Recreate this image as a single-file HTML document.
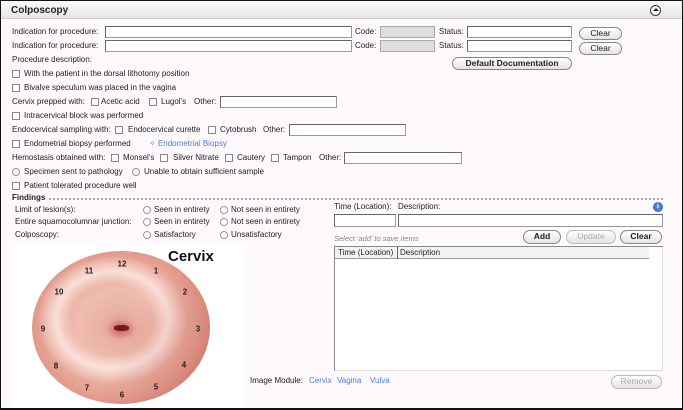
<!DOCTYPE html>
<html><head><meta charset="utf-8"><style>
*{margin:0;padding:0;box-sizing:border-box}
body{width:683px;height:410px;overflow:hidden;font-family:"Liberation Sans",sans-serif;font-size:8px;color:#222;background:#fff}
#f{position:absolute;left:0;top:0;width:683px;height:410px;border:1px solid #111;border-bottom:2px solid #111;background:#fdf9fd}
.a{position:absolute;white-space:nowrap;line-height:10px}
.hd{position:absolute;left:0;top:0;width:681px;height:18px;background:linear-gradient(#fafafa,#e6e6e6);border-bottom:1px solid #ccc}
.in{position:absolute;height:12px;background:#fff;border:1px solid #999;border-top-color:#666;border-left-color:#666}
.cd{background:#ddd;border-color:#aaa}
.bt{position:absolute;height:13px;border:1px solid #888;border-radius:7px;background:linear-gradient(#fff,#e4e4e4);text-align:center;line-height:11px;font-size:8.5px}
.cb{position:absolute;width:8px;height:8px;border:1px solid #888;background:#fff}
.rd{position:absolute;width:8px;height:8px;border:1px solid #999;border-radius:50%;background:#fff}
.lk{color:#4a7de0}
.n{position:absolute;font-weight:bold;font-size:8px;color:#222;transform:translate(-50%,-50%)}
</style></head><body><div id="f">
<div class="hd"></div>
<div class="a" style="left:10px;top:5px;font-weight:bold;font-size:10px">Colposcopy</div>
<div style="position:absolute;left:649px;top:4px;width:11px;height:11px;border:1px solid #333;border-radius:50%;background:#fff"></div>
<div style="position:absolute;left:652px;top:7px;width:0;height:0;border-left:3px solid transparent;border-right:3px solid transparent;border-bottom:3px solid #222"></div>

<div class="a" style="left:11px;top:26px">Indication for procedure:</div>
<div class="in" style="left:104px;top:25px;width:247px"></div>
<div class="a" style="left:354px;top:26px">Code:</div>
<div class="in cd" style="left:379px;top:25px;width:55px"></div>
<div class="a" style="left:438px;top:26px">Status:</div>
<div class="in" style="left:466px;top:25px;width:105px"></div>
<div class="bt" style="left:578px;top:26px;width:43px">Clear</div>

<div class="a" style="left:11px;top:40px">Indication for procedure:</div>
<div class="in" style="left:104px;top:39px;width:247px"></div>
<div class="a" style="left:354px;top:40px">Code:</div>
<div class="in cd" style="left:379px;top:39px;width:55px"></div>
<div class="a" style="left:438px;top:40px">Status:</div>
<div class="in" style="left:466px;top:39px;width:105px"></div>
<div class="bt" style="left:578px;top:41px;width:43px">Clear</div>
<div class="bt" style="left:451px;top:56px;width:120px;font-weight:bold">Default Documentation</div>

<div class="a" style="left:11px;top:54px">Procedure description:</div>
<div class="cb" style="left:11px;top:69px"></div><div class="a" style="left:23px;top:68px">With the patient in the dorsal lithotomy position</div>
<div class="cb" style="left:11px;top:83px"></div><div class="a" style="left:23px;top:82px">Bivalve speculum was placed in the vagina</div>
<div class="a" style="left:11px;top:96px">Cervix prepped with:</div>
<div class="cb" style="left:90px;top:97px"></div><div class="a" style="left:100px;top:96px">Acetic acid</div>
<div class="cb" style="left:148px;top:97px"></div><div class="a" style="left:160px;top:96px">Lugol's</div>
<div class="a" style="left:193px;top:96px">Other:</div><div class="in" style="left:219px;top:95px;width:117px"></div>
<div class="cb" style="left:11px;top:111px"></div><div class="a" style="left:23px;top:110px">Intracervical block was performed</div>
<div class="a" style="left:11px;top:124px">Endocervical sampling with:</div>
<div class="cb" style="left:114px;top:125px"></div><div class="a" style="left:127px;top:124px">Endocervical curette</div>
<div class="cb" style="left:207px;top:125px"></div><div class="a" style="left:219px;top:124px">Cytobrush</div>
<div class="a" style="left:262px;top:124px">Other:</div><div class="in" style="left:288px;top:123px;width:117px"></div>
<div class="cb" style="left:11px;top:139px"></div><div class="a" style="left:23px;top:138px">Endometrial biopsy performed</div>
<div class="a lk" style="left:148px;top:138px">✧ Endometrial Biopsy</div>
<div class="a" style="left:11px;top:152px">Hemostasis obtained with:</div>
<div class="cb" style="left:110px;top:153px"></div><div class="a" style="left:122px;top:152px">Monsel's</div>
<div class="cb" style="left:159px;top:153px"></div><div class="a" style="left:172px;top:152px">Silver Nitrate</div>
<div class="cb" style="left:224px;top:153px"></div><div class="a" style="left:236px;top:152px">Cautery</div>
<div class="cb" style="left:270px;top:153px"></div><div class="a" style="left:282px;top:152px">Tampon</div>
<div class="a" style="left:318px;top:152px">Other:</div><div class="in" style="left:343px;top:151px;width:118px"></div>
<div class="rd" style="left:11px;top:167px"></div><div class="a" style="left:23px;top:166px">Specimen sent to pathology</div>
<div class="rd" style="left:131px;top:167px"></div><div class="a" style="left:143px;top:166px">Unable to obtain sufficient sample</div>
<div class="cb" style="left:11px;top:181px"></div><div class="a" style="left:23px;top:180px">Patient tolerated procedure well</div>

<div class="a" style="left:11px;top:192px;font-weight:bold">Findings</div>
<div style="position:absolute;left:48px;top:197px;width:614px;border-top:2px dotted #aaa"></div>
<div class="a" style="left:14px;top:204px">Limit of lesion(s):</div>
<div class="a" style="left:14px;top:216px">Entire squamocolumnar junction:</div>
<div class="a" style="left:14px;top:229px">Colposcopy:</div>
<div class="rd" style="left:142px;top:205px"></div><div class="a" style="left:153px;top:204px">Seen in entirety</div>
<div class="rd" style="left:219px;top:205px"></div><div class="a" style="left:230px;top:204px">Not seen in entirety</div>
<div class="rd" style="left:142px;top:217px"></div><div class="a" style="left:153px;top:216px">Seen in entirety</div>
<div class="rd" style="left:219px;top:217px"></div><div class="a" style="left:230px;top:216px">Not seen in entirety</div>
<div class="rd" style="left:142px;top:230px"></div><div class="a" style="left:153px;top:229px">Satisfactory</div>
<div class="rd" style="left:219px;top:230px"></div><div class="a" style="left:230px;top:229px">Unsatisfactory</div>

<div style="position:absolute;left:12px;top:244px;width:233px;height:162px;background:#fff"></div>
<div style="position:absolute;left:31px;top:250px;width:178px;height:153px;border-radius:50%;background:radial-gradient(ellipse 42% 42% at 45% 45%,rgba(255,255,255,0) 55%,rgba(255,240,235,.75) 75%,rgba(255,255,255,0) 100%),radial-gradient(ellipse 70% 70% at 50% 50%,#de9488 0%,#eab0a4 15%,#efbcb0 35%,#e8a798 60%,#d9877a 85%,#c8675d 100%)"></div>
<div style="position:absolute;left:31px;top:250px;width:178px;height:153px;border-radius:50%;background:radial-gradient(ellipse 60% 60% at 30% 75%,rgba(255,255,255,0) 60%,rgba(0,0,0,0) 100%),linear-gradient(120deg,rgba(255,255,255,0) 55%,rgba(170,60,50,.35) 100%)"></div>
<div style="position:absolute;left:105px;top:318px;width:30px;height:20px;border-radius:50%;background:radial-gradient(#c0646a,rgba(220,140,130,0) 70%)"></div>
<div style="position:absolute;left:113px;top:324px;width:15px;height:6px;border-radius:40%;background:#7d1720"></div>
<div class="a" style="left:167px;top:248px;font-size:15px;line-height:16px;font-weight:bold;color:#111">Cervix</div>
<div class="n" style="left:121px;top:263px">12</div>
<div class="n" style="left:88px;top:270px">11</div>
<div class="n" style="left:155px;top:270px">1</div>
<div class="n" style="left:58px;top:291px">10</div>
<div class="n" style="left:184px;top:291px">2</div>
<div class="n" style="left:42px;top:328px">9</div>
<div class="n" style="left:197px;top:328px">3</div>
<div class="n" style="left:55px;top:365px">8</div>
<div class="n" style="left:183px;top:364px">4</div>
<div class="n" style="left:86px;top:387px">7</div>
<div class="n" style="left:155px;top:386px">5</div>
<div class="n" style="left:121px;top:394px">6</div>

<div class="a" style="left:333px;top:201px">Time (Location):</div>
<div class="a" style="left:397px;top:201px">Description:</div>
<div style="position:absolute;left:652px;top:201px;width:10px;height:10px;border-radius:50%;background:radial-gradient(#6a9cf0,#1a4fb8);color:#fff;font-size:7px;font-weight:bold;text-align:center;line-height:10px">i</div>
<div class="in" style="left:333px;top:213px;width:62px;height:13px"></div>
<div class="in" style="left:397px;top:213px;width:265px;height:13px"></div>
<div class="a" style="left:333px;top:233px;font-style:italic;color:#888;font-size:7.5px">Select 'add' to save items</div>
<div class="bt" style="left:522px;top:229px;width:38px;height:14px;font-weight:bold">Add</div>
<div class="bt" style="left:565px;top:229px;width:50px;height:14px;color:#aaa;border-color:#bbb">Update</div>
<div class="bt" style="left:619px;top:229px;width:42px;height:14px;font-weight:bold">Clear</div>
<div style="position:absolute;left:333px;top:245px;width:329px;height:125px;background:#fff;border:1px solid #888;border-right-color:#ddd;border-bottom-color:#ddd"></div>
<div style="position:absolute;left:334px;top:246px;width:314px;height:12px;background:#f3f3f3;border-bottom:1px solid #999"></div>
<div style="position:absolute;left:396px;top:246px;height:12px;border-left:1px solid #666"></div>
<div class="a" style="left:337px;top:247px">Time (Location)</div>
<div class="a" style="left:399px;top:247px">Description</div>
<div class="a" style="left:249px;top:375px">Image Module:</div>
<div class="a lk" style="left:308px;top:375px">Cervix</div>
<div class="a lk" style="left:336px;top:375px">Vagina</div>
<div class="a lk" style="left:369px;top:375px">Vulva</div>
<div class="bt" style="left:610px;top:374px;width:51px;height:14px;color:#aaa;border-color:#bbb">Remove</div>
</div></body></html>
